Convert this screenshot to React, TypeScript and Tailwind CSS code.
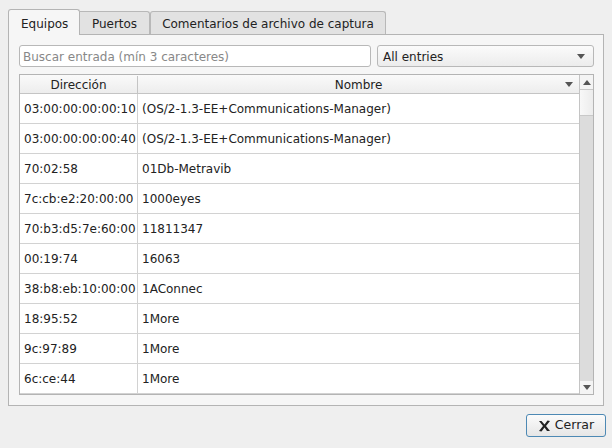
import React from "react";

const rows: [string, string][] = [
  ["03:00:00:00:00:10", "(OS/2-1.3-EE+Communications-Manager)"],
  ["03:00:00:00:00:40", "(OS/2-1.3-EE+Communications-Manager)"],
  ["70:02:58", "01Db-Metravib"],
  ["7c:cb:e2:20:00:00", "1000eyes"],
  ["70:b3:d5:7e:60:00", "11811347"],
  ["00:19:74", "16063"],
  ["38:b8:eb:10:00:00", "1AConnec"],
  ["18:95:52", "1More"],
  ["9c:97:89", "1More"],
  ["6c:ce:44", "1More"],
  ["", ""],
];

const Arrow = ({ up = false }: { up?: boolean }) => (
  <svg width="8" height="5" viewBox="0 0 8 5" className={up ? "rotate-180" : ""}>
    <path d="M0 0 H8 L4 5 Z" fill="#555" />
  </svg>
);

export default function App() {
  return (
    <div
      className="relative h-[448px] w-[612px] overflow-hidden bg-[#efefef] text-[12px] text-[#222]"
      style={{ fontFamily: '"DejaVu Sans", sans-serif' }}
    >
      {/* tabs */}
      <div className="flex items-end pl-[8px] pt-[9px]">
        <div className="relative z-10 flex h-[26px] w-[72px] items-start rounded-t-[3px] border border-b-0 border-[#b4b4b4] bg-[#f6f6f6] pl-[12px] pt-[5px]">
          Equipos
        </div>
        <div className="mb-px flex h-[23px] w-[70px] items-center justify-center rounded-tr-[3px] border border-l-0 border-b-0 border-[#b8b8b8] bg-[#e2e2e2] pt-px">
          Puertos
        </div>
        <div className="mb-px flex h-[23px] w-[236px] items-center justify-center rounded-t-[3px] border border-b-0 border-[#b8b8b8] bg-[#e2e2e2] pt-px">
          Comentarios de archivo de captura
        </div>
      </div>

      {/* panel */}
      <div className="-mt-px ml-[8px] h-[372px] w-[596px] border border-[#b4b4b4] bg-[#f6f6f6] pl-[10px] pt-[10px]">
        <div className="flex h-[22px] gap-[6px]">
          <div className="flex w-[352px] items-center rounded-[3px] border border-[#b8b8b8] bg-white pl-[3px] pt-px text-[#888]">
            Buscar entrada (mín 3 caracteres)
          </div>
          <div className="flex w-[217px] items-center justify-between rounded-[3px] border border-[#b8b8b8] bg-gradient-to-b from-[#fbfbfb] to-[#ececec] pl-[5px] pr-[8px] pt-px">
            <span>All entries</span>
            <Arrow />
          </div>
        </div>

        {/* table */}
        <div className="mt-[7px] flex h-[321px] w-[575px] overflow-hidden border border-[#b4b4b4] bg-white">
          <div className="flex-1 overflow-hidden">
            <div className="flex h-[19px] border-b border-[#c4c4c4] bg-gradient-to-b from-[#fafafa] to-[#ededed] pt-px">
              <div className="flex w-[118px] items-center justify-center border-r border-[#c4c4c4]">Dirección</div>
              <div className="relative flex flex-1 items-center justify-center">
                Nombre
                <span className="absolute right-[6px] top-[6px]">
                  <Arrow />
                </span>
              </div>
            </div>
            {rows.map(([addr, name], i) => (
              <div key={i} className="flex h-[30px] border-b border-[#d2d2d2]">
                <div className="flex w-[118px] items-center border-r border-[#d2d2d2] pl-[4px]">{addr}</div>
                <div className="flex flex-1 items-center pl-[4px]">{name}</div>
              </div>
            ))}
          </div>
          {/* scrollbar */}
          <div className="flex w-[14px] flex-col border-l border-[#c4c4c4] bg-[#dcdcdc]">
            <div className="flex h-[14px] items-center justify-center bg-[#f4f4f4]">
              <Arrow up />
            </div>
            <div className="h-[27px] border-y border-[#c8c8c8] bg-gradient-to-r from-[#f8f8f8] to-[#ececec]" />
            <div className="flex-1" />
            <div className="flex h-[13px] items-center justify-center bg-[#f4f4f4]">
              <Arrow />
            </div>
          </div>
        </div>
      </div>

      {/* footer */}
      <div className="flex justify-end pr-[6px] pt-[8px]">
        <button className="flex h-[23px] w-[80px] items-center justify-center gap-[4px] rounded-[3px] border border-[#4d89b4] bg-gradient-to-b from-[#fbfbfb] to-[#e6e6e6] text-[12.5px]">
          <svg width="13" height="12" viewBox="0 0 13 12">
            <path d="M1 1 L3.5 1 L6.5 4.5 L9.5 0.5 L12 1 L8 6 L12 11 L9 11 L6.5 7.5 L3.5 11.5 L1 11 L5 6 Z" fill="#222" />
          </svg>
          Cerrar
        </button>
      </div>
    </div>
  );
}
